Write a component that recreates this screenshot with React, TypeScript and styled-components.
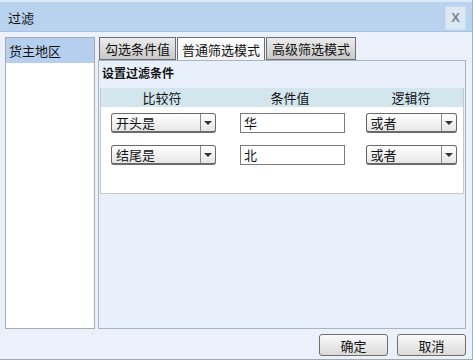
import styled, { createGlobalStyle } from "styled-components";

const GlobalStyle = createGlobalStyle`
  html, body {
    margin: 0;
    padding: 0;
    background: #eaf1fb;
  }
  * {
    box-sizing: border-box;
  }
  body {
    font-family: "Noto Sans CJK SC", "Liberation Sans", sans-serif;
    font-size: 12px;
    color: #111;
  }
`;

const Dialog = styled.div`
  width: 473px;
  height: 360px;
  display: flex;
  flex-direction: column;
  background: #eaf1fb;
  border-right: 1px solid #9fb3cc;
  border-bottom: 1px solid #a8a8a8;
`;

const TitleBar = styled.div`
  height: 32px;
  flex: none;
  display: flex;
  align-items: center;
  justify-content: space-between;
  padding: 2px 6px 0 8px;
  background: #b9d2ee;
  border-top: 2px solid #dbe8f6;
  border-bottom: 1px solid #a9c2e2;
  font-size: 13px;
`;

const CloseButton = styled.div`
  width: 21px;
  height: 24px;
  display: flex;
  align-items: center;
  justify-content: center;
  background: #dce8f6;
  border: 1px solid #cbdcef;
  color: #80858d;
  font-family: "Liberation Sans", sans-serif;
  font-weight: bold;
  font-size: 13px;
`;

const Body = styled.div`
  flex: 1;
  display: flex;
  gap: 3px;
  padding: 5px 6px 0 5px;
`;

const SidePanel = styled.div`
  width: 92px;
  height: 292px;
  background: #fff;
  border: 1px solid #a6acb4;
`;

const SideItem = styled.div<{ $selected?: boolean }>`
  height: 25px;
  display: flex;
  align-items: center;
  padding-left: 3px;
  background: ${(p) => (p.$selected ? "#b6cfee" : "transparent")};
  font-size: 13px;
`;

const Main = styled.div`
  flex: 1;
  display: flex;
  flex-direction: column;
  height: 292px;
`;

const TabStrip = styled.div`
  height: 23px;
  display: flex;
  align-items: flex-end;
  gap: 1px;
  margin-left: 1px;
`;

const Tab = styled.div<{ $active?: boolean; $w: number }>`
  width: ${(p) => p.$w}px;
  height: 23px;
  display: flex;
  align-items: center;
  justify-content: center;
  font-size: 13px;
  border: 1px solid #6f6f6f;
  border-bottom: ${(p) => (p.$active ? "none" : "1px solid #6f6f6f")};
  background: ${(p) =>
    p.$active
      ? "linear-gradient(#ffffff, #f3f3f3)"
      : "linear-gradient(#ececec, #c9c9c9)"};
`;

const TabBody = styled.div`
  flex: 1;
  background: #e8f0fb;
  border: 1px solid #a9b4c2;
  padding: 4px 1px 0 1px;
`;

const SectionTitle = styled.div`
  font-weight: bold;
  font-size: 12px;
  height: 23px;
  padding-left: 2px;
  line-height: 16px;
`;

const Table = styled.div`
  width: 364px;
  border-right: 1px solid #c4c9cf;
  border-left: 1px solid #c4c9cf;
`;

const Columns = styled.div`
  display: grid;
  grid-template-columns: 122px 134px 108px;
  align-items: center;
  justify-items: center;
`;

const HeaderRow = styled(Columns)`
  height: 19px;
  background: #d3e6ee;
  font-size: 13px;
`;

const Rows = styled.div`
  background: #fff;
  padding: 6px 0 28px;
  display: flex;
  flex-direction: column;
  gap: 12px;
  border-bottom: 1px solid #c4c9cf;
`;

const Select = styled.div<{ $w: number; $shift: number }>`
  width: ${(p) => p.$w}px;
  height: 20px;
  display: flex;
  margin-left: ${(p) => p.$shift}px;
  border: 1px solid #6a6a6a;
  border-bottom-width: 2px;
  border-radius: 3px;
  background: linear-gradient(#ffffff, #e6e6e6);
  font-size: 13px;
`;

const SelectText = styled.div`
  flex: 1;
  padding-left: 4px;
  line-height: 17px;
`;

const SelectArrow = styled.div`
  width: 15px;
  border-left: 1px solid #8a8a8a;
  display: flex;
  align-items: center;
  justify-content: center;
  &::after {
    content: "";
    border-left: 4px solid transparent;
    border-right: 4px solid transparent;
    border-top: 4px solid #333;
  }
`;

const Input = styled.div`
  width: 105px;
  height: 20px;
  border: 1px solid #7b7b7b;
  background: #fff;
  padding-left: 3px;
  line-height: 17px;
  font-size: 13px;
  justify-self: start;
  margin-left: 17px;
`;

const Footer = styled.div`
  height: 31px;
  display: flex;
  justify-content: flex-end;
  align-items: flex-start;
  gap: 9px;
  padding: 5px 6px 0 0;
`;

const Button = styled.div`
  width: 69px;
  height: 22px;
  display: flex;
  align-items: center;
  justify-content: center;
  border: 1px solid #6e6e6e;
  border-radius: 3px;
  background: linear-gradient(#fafafa, #dadada);
  font-size: 13px;
`;

const rows = [
  { op: "开头是", value: "华", logic: "或者" },
  { op: "结尾是", value: "北", logic: "或者" },
];

function Dropdown({ text, width, shift }: { text: string; width: number; shift: number }) {
  return (
    <Select $w={width} $shift={shift}>
      <SelectText>{text}</SelectText>
      <SelectArrow />
    </Select>
  );
}

export default function App() {
  return (
    <>
      <GlobalStyle />
      <Dialog>
        <TitleBar>
          <span>过滤</span>
          <CloseButton>X</CloseButton>
        </TitleBar>
        <Body>
          <SidePanel>
            <SideItem $selected>货主地区</SideItem>
          </SidePanel>
          <Main>
            <TabStrip>
              <Tab $w={77}>勾选条件值</Tab>
              <Tab $w={88} $active>
                普通筛选模式
              </Tab>
              <Tab $w={90}>高级筛选模式</Tab>
            </TabStrip>
            <TabBody>
              <SectionTitle>设置过滤条件</SectionTitle>
              <Table>
                <HeaderRow>
                  <span>比较符</span>
                  <span>条件值</span>
                  <span>逻辑符</span>
                </HeaderRow>
                <Rows>
                  {rows.map((r) => (
                    <Columns key={r.op}>
                      <Dropdown text={r.op} width={105} shift={3} />
                      <Input>{r.value}</Input>
                      <Dropdown text={r.logic} width={91} shift={0} />
                    </Columns>
                  ))}
                </Rows>
              </Table>
            </TabBody>
          </Main>
        </Body>
        <Footer>
          <Button>确定</Button>
          <Button>取消</Button>
        </Footer>
      </Dialog>
    </>
  );
}
